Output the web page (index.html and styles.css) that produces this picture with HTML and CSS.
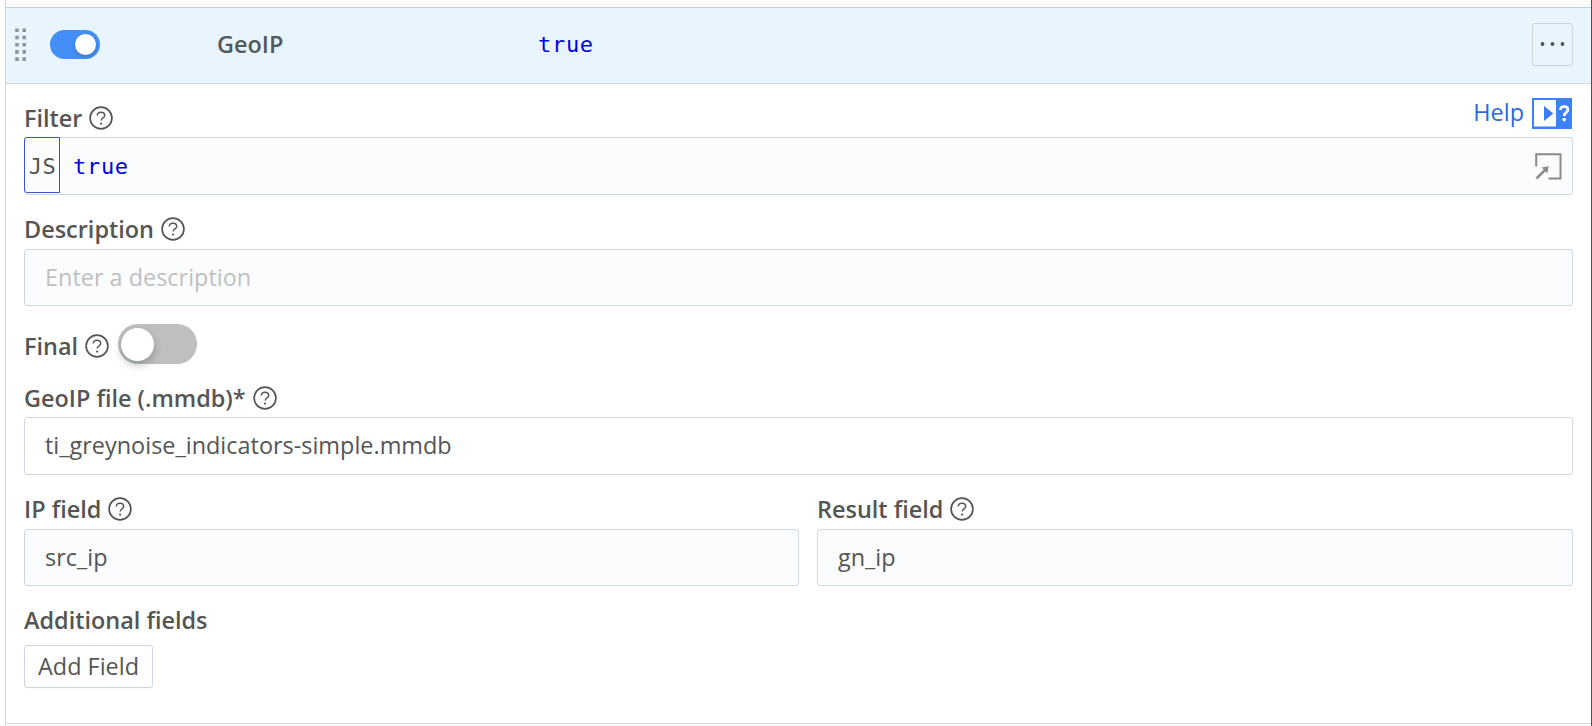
FILE: index.html
```html
<!DOCTYPE html>
<html lang="en">
<head>
  <meta charset="UTF-8">
  <meta name="viewport" content="width=device-width, initial-scale=1.0">
  <title>GeoIP</title>
  <link rel="stylesheet" href="styles.css">
</head>
<body>

  <svg class="defs" aria-hidden="true">
    <symbol id="help-icon" viewBox="0 0 24 24">
      <circle cx="12" cy="12" r="10.9" fill="none" stroke="currentColor" stroke-width="1.7"/>
      <path d="M8.3 9.4C8.3 7.4 9.8 6.2 12 6.2s3.7 1.3 3.7 3.2c0 2.4-3.5 2.6-3.5 5.2" fill="none" stroke="currentColor" stroke-width="1.5"/>
      <circle cx="12.1" cy="17.6" r="1.1" fill="currentColor"/>
    </symbol>
  </svg>

  <div class="function">
    <!-- Function header -->
    <div class="header">
      <svg class="drag" viewBox="0 0 12 34">
        <path d="M2 .5v34M9.2 .5v34" stroke="#8d9599" stroke-width="3.6" stroke-dasharray="3.6 3.6"/>
      </svg>
      <div class="switch switch-on"><span class="knob"></span></div>
      <div class="name">GeoIP</div>
      <code class="code">true</code>
      <button class="menu-btn">
        <svg width="26" height="6" viewBox="0 0 26 6" fill="#4d5558">
          <circle cx="2.5" cy="3" r="1.9"/>
          <circle cx="12.5" cy="3" r="1.9"/>
          <circle cx="22.5" cy="3" r="1.9"/>
        </svg>
      </button>
    </div>

    <!-- Function settings -->
    <div class="settings">
      <div class="field">
        <div class="label-row">
          <label class="label label-low">Filter <svg class="help"><use href="#help-icon"/></svg></label>
          <a class="help-link"><span>Help</span>
            <svg width="40" height="31" viewBox="0 0 40 31">
              <path d="M0 0h40v31H0z" fill="#3b82f6"/>
              <path d="M2 2h22v26.5H2z" fill="#fff"/>
              <path d="M12 8l9.3 7.5L12 23z" fill="#3b7bf0"/>
              <path d="M28.3 11.8c.3-2.3 1.8-3.3 3.8-3.3 2.3 0 3.8 1.3 3.8 3.2 0 2.9-3.7 2.9-3.7 6.2" fill="none" stroke="#fff" stroke-width="2.7"/>
              <circle cx="32.1" cy="21.6" r="1.8" fill="#fff"/>
            </svg>
          </a>
        </div>
        <div class="input input-tall input-code">
          <span class="js">JS</span>
          <code class="code">true</code>
          <svg class="expand" width="27" height="27" viewBox="0 0 27 27" fill="none" stroke="#8a8a8a" stroke-width="2">
            <path d="M1.2 13.5V1.2h24.3v24.3H13.5"/>
            <path d="M1.5 25.5L12 15" stroke-width="2.5"/>
            <path d="M13.7 13.2l-7 1.4 5.6 5.6z" fill="#8a8a8a" stroke="none"/>
          </svg>
        </div>
      </div>

      <div class="field">
        <label class="label">Description <svg class="help"><use href="#help-icon"/></svg></label>
        <div class="input placeholder">Enter a description</div>
      </div>

      <div class="final">
        <label class="label">Final <svg class="help"><use href="#help-icon"/></svg></label>
        <div class="switch switch-off"><span class="knob"></span></div>
      </div>

      <div class="field">
        <label class="label label-low">GeoIP file (.mmdb)* <svg class="help"><use href="#help-icon"/></svg></label>
        <div class="input input-tall input-white">ti_greynoise_indicators-simple.mmdb</div>
      </div>

      <div class="columns">
        <div class="field">
          <label class="label">IP field <svg class="help"><use href="#help-icon"/></svg></label>
          <div class="input">src_ip</div>
        </div>
        <div class="field">
          <label class="label">Result field <svg class="help"><use href="#help-icon"/></svg></label>
          <div class="input">gn_ip</div>
        </div>
      </div>

      <div class="additional">
        <div class="label">Additional fields</div>
        <button class="add-btn">Add Field</button>
      </div>
    </div>
  </div>

</body>
</html>
```
FILE: styles.css
```css
* {
  box-sizing: border-box;
}

body {
  margin: 0;
  height: 726px;
  overflow: hidden;
  background-color: #fff;
  border-right: 1px solid #4f4f4f;
  font-family: "Open Sans", sans-serif;
  font-size: 23.45px;
  line-height: 32px;
  color: #555;
}

.defs {
  display: none;
}

.function {
  height: 726px;
  margin-left: 5px;
  padding-top: 7px;
  border-left: 1px solid #d3d7da;
  background: linear-gradient(#fcfcfc 7px, #fff 7px);
}

/* Header */
.header {
  display: flex;
  align-items: center;
  height: 77px;
  padding: 0 18px 2px 9px;
  background-color: #e8f5fe;
  border-top: 1px solid #c3d1da;
  border-bottom: 1px solid #d0d9df;
}

.drag {
  width: 12px;
  height: 34px;
  margin-right: 23px;
}

.name {
  width: 321px;
  margin-left: 117px;
  padding-bottom: 2px;
  font-weight: 600;
  color: #53585b;
}

.code {
  font-family: "DejaVu Sans Mono", monospace;
  font-size: 22px;
  letter-spacing: 0.7px;
  color: #0000ee;
}

.menu-btn {
  display: flex;
  align-items: center;
  justify-content: center;
  width: 41px;
  height: 43px;
  margin-left: auto;
  padding: 0 0 1px;
  background-color: transparent;
  border: 1px solid #cbd6de;
  border-radius: 3px;
  box-shadow: 0 2px 2px rgba(0, 0, 0, 0.02);
}

/* Switches */
.switch {
  display: flex;
  align-items: center;
  border-radius: 20px;
}

.knob {
  border-radius: 50%;
  background-color: #fff;
}

.switch-on {
  justify-content: flex-end;
  width: 50px;
  height: 29px;
  padding-right: 4px;
  background-color: #448ef7;
}

.switch-on .knob {
  width: 21px;
  height: 21px;
  box-shadow: 0 2px 4px rgba(0, 35, 11, 0.2);
}

.switch-off {
  width: 79px;
  height: 40px;
  padding-left: 3px;
  background-color: #bfbfbf;
}

.switch-off .knob {
  width: 33px;
  height: 33px;
  box-shadow: 0 4px 8px rgba(0, 35, 11, 0.25);
}

/* Settings */
.settings {
  height: 640px;
  padding: 17px 18px 0;
  border-bottom: 1px solid #d3d7da;
}

.field {
  margin-bottom: 18px;
}

.label {
  display: flex;
  align-items: center;
  gap: 7px;
  height: 36px;
  padding-bottom: 4px;
  font-weight: 600;
}

.label-low {
  padding-bottom: 2px;
}

.help {
  width: 24px;
  height: 24px;
}

.label-row {
  display: flex;
  justify-content: space-between;
}

.help-link {
  display: flex;
  align-items: center;
  gap: 8px;
  height: 31px;
  margin: -3px 1px 0 0;
  color: #2a6bdc;
}

.help-link span {
  padding-bottom: 4px;
}

.input {
  display: flex;
  align-items: center;
  height: 57px;
  padding: 0 20px 1px;
  background-color: #fbfcfe;
  border: 1px solid #cfd8df;
  border-radius: 3px;
}

.input-tall {
  height: 58px;
}

.input-white {
  padding-bottom: 3px;
  background-color: #fff;
}

.placeholder {
  color: #bfbfbf;
}

.input-code {
  padding: 0 10px 0 0;
}

.input-code .code {
  padding-top: 2px;
}

.js {
  display: flex;
  align-items: center;
  justify-content: center;
  align-self: flex-start;
  width: 36px;
  height: 56px;
  margin: -1px 13px 0 -1px;
  padding: 3px 0 0 1px;
  border: 1px solid #3c53d6;
  border-radius: 3px 0 0 3px;
  font-family: "DejaVu Sans Mono", monospace;
  font-size: 22px;
  letter-spacing: 0.6px;
}

.expand {
  margin-left: auto;
}

.final {
  display: flex;
  align-items: center;
  gap: 9px;
  height: 40px;
  margin-bottom: 17px;
}

.final .label {
  padding: 4px 0 0;
}

.columns {
  display: grid;
  grid-template-columns: 775px 1fr;
  gap: 18px;
}

.additional .label {
  height: 41px;
  padding-bottom: 9px;
}

.add-btn {
  width: 129px;
  height: 43px;
  padding: 0 0 1px;
  background-color: #fff;
  border: 1px solid #cbd6de;
  border-radius: 3px;
  box-shadow: 0 2px 2px rgba(0, 0, 0, 0.02);
  font: inherit;
  color: #555;
}
```
